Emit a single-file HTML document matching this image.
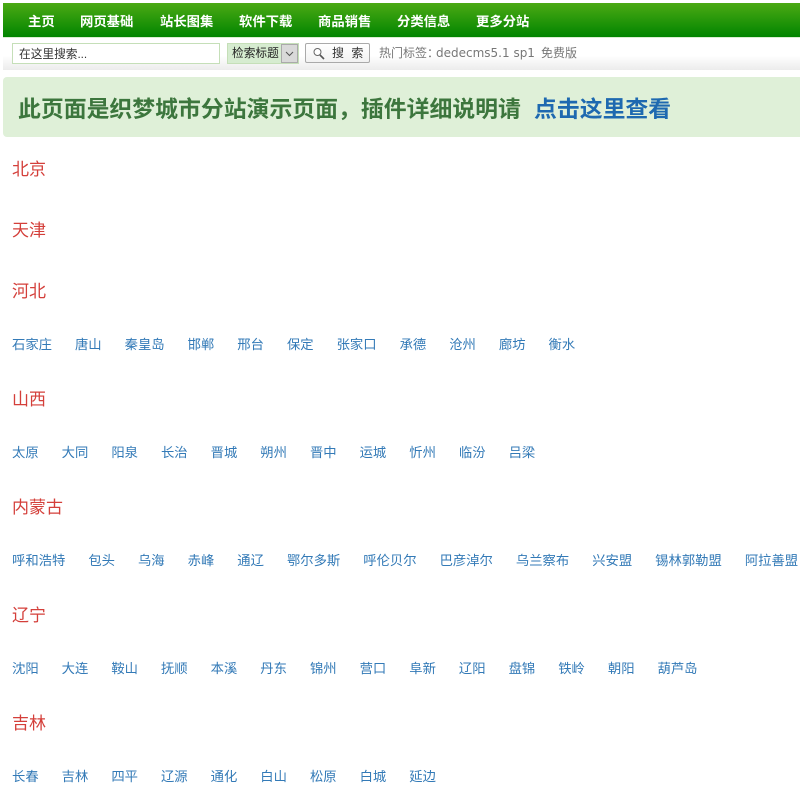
<!DOCTYPE html>
<html lang="zh"><head><meta charset="utf-8"><title>城市分站</title>
<style>
*{margin:0;padding:0;box-sizing:border-box}
html,body{width:800px;height:789px;overflow:hidden;background:#fff}
body{position:relative;font-family:"Liberation Sans","Noto Sans CJK SC",sans-serif;font-size:13px}
.a{position:absolute;white-space:nowrap}
#nav{left:3px;top:3px;width:797px;height:34px;background:linear-gradient(#4caa14,#008400)}
.n{top:13px;color:#fff;font-weight:bold;font-size:13.33px;line-height:18px}
#bar{left:3px;top:37px;width:797px;height:33px;background:linear-gradient(#fff 55%,#ececec);border-top:1px solid #d8eed0}
#inp{left:12px;top:43px;width:208px;height:21px;background:#fff;border:1px solid #c5dfb8;padding-left:6px;font-size:11.7px;line-height:22px;color:#333}
#sel{left:227px;top:43px;width:72px;height:21px;background:#d6ecd0;border:1px solid #c5dfb8;font-size:11.7px;line-height:20px;color:#222;padding-left:4px}
#arr{left:281px;top:44px;width:17px;height:19px;background:#d9d9d9;border:1px solid #aaa}
#btn{left:305px;top:43px;width:65px;height:20px;background:linear-gradient(#fff,#f2f2f2);border:1px solid #aaa;border-radius:2px;font-size:12px;line-height:18px;color:#333;padding-left:26px;word-spacing:4px}
.h{top:45px;font-size:12px;line-height:17px;color:#777}
#hd{font-family:"DejaVu Sans",sans-serif}
#ban{left:3px;top:77px;width:797px;height:60px;background:#dff0d8;border-radius:4px 0 0 4px}
#t1{left:18px;top:93px;font-size:22.86px;line-height:33px;font-weight:bold;color:#3c763d}
#t2{left:534px;top:93px;font-size:22.86px;line-height:33px;font-weight:bold;color:#1e69b0}
h3{position:absolute;left:12px;font-size:17px;line-height:26px;font-weight:normal;color:#d43f3a;white-space:nowrap}
.r{position:absolute;left:12px;height:20px;line-height:20px;font-size:13.33px;color:#337ab7;white-space:nowrap;display:flex}
.r span{margin-right:23px;flex:none}
</style></head><body>
<div class="a" id="nav"></div>
<div class="a n" style="left:28px">主页</div>
<div class="a n" style="left:80px">网页基础</div>
<div class="a n" style="left:160px">站长图集</div>
<div class="a n" style="left:239px">软件下载</div>
<div class="a n" style="left:318px">商品销售</div>
<div class="a n" style="left:397px">分类信息</div>
<div class="a n" style="left:476px">更多分站</div>
<div class="a" id="bar"></div>
<div class="a" id="inp">在这里搜索...</div>
<div class="a" id="sel">检索标题</div>
<div class="a" id="arr"><svg width="15" height="17" style="display:block"><path d="M4 7l3.5 3.5L11 7" fill="none" stroke="#555" stroke-width="1"/></svg></div>
<div class="a" id="btn">搜 索</div>
<svg class="a" style="left:312px;top:47px" width="14" height="13"><circle cx="5.5" cy="5" r="3.5" fill="#fff" stroke="#666"/><path d="M8 8l4 4" stroke="#555" stroke-width="1.6"/></svg>
<div class="a h" style="left:379px">热门标签：</div>
<div class="a h" id="hd" style="left:436px">dedecms5.1 sp1</div>
<div class="a h" style="left:541px">免费版</div>
<div class="a" id="ban"></div>
<div class="a" id="t1">此页面是织梦城市分站演示页面，插件详细说明请</div>
<div class="a" id="t2">点击这里查看</div>
<h3 style="top:157px">北京</h3>
<h3 style="top:218px">天津</h3>
<h3 style="top:279px">河北</h3>
<div class="r" style="top:335px"><span>石家庄</span><span>唐山</span><span>秦皇岛</span><span>邯郸</span><span>邢台</span><span>保定</span><span>张家口</span><span>承德</span><span>沧州</span><span>廊坊</span><span>衡水</span></div>
<h3 style="top:387px">山西</h3>
<div class="r" style="top:443px"><span>太原</span><span>大同</span><span>阳泉</span><span>长治</span><span>晋城</span><span>朔州</span><span>晋中</span><span>运城</span><span>忻州</span><span>临汾</span><span>吕梁</span></div>
<h3 style="top:495px">内蒙古</h3>
<div class="r" style="top:551px"><span>呼和浩特</span><span>包头</span><span>乌海</span><span>赤峰</span><span>通辽</span><span>鄂尔多斯</span><span>呼伦贝尔</span><span>巴彦淖尔</span><span>乌兰察布</span><span>兴安盟</span><span>锡林郭勒盟</span><span>阿拉善盟</span></div>
<h3 style="top:603px">辽宁</h3>
<div class="r" style="top:659px"><span>沈阳</span><span>大连</span><span>鞍山</span><span>抚顺</span><span>本溪</span><span>丹东</span><span>锦州</span><span>营口</span><span>阜新</span><span>辽阳</span><span>盘锦</span><span>铁岭</span><span>朝阳</span><span>葫芦岛</span></div>
<h3 style="top:711px">吉林</h3>
<div class="r" style="top:767px"><span>长春</span><span>吉林</span><span>四平</span><span>辽源</span><span>通化</span><span>白山</span><span>松原</span><span>白城</span><span>延边</span></div>
</body></html>
